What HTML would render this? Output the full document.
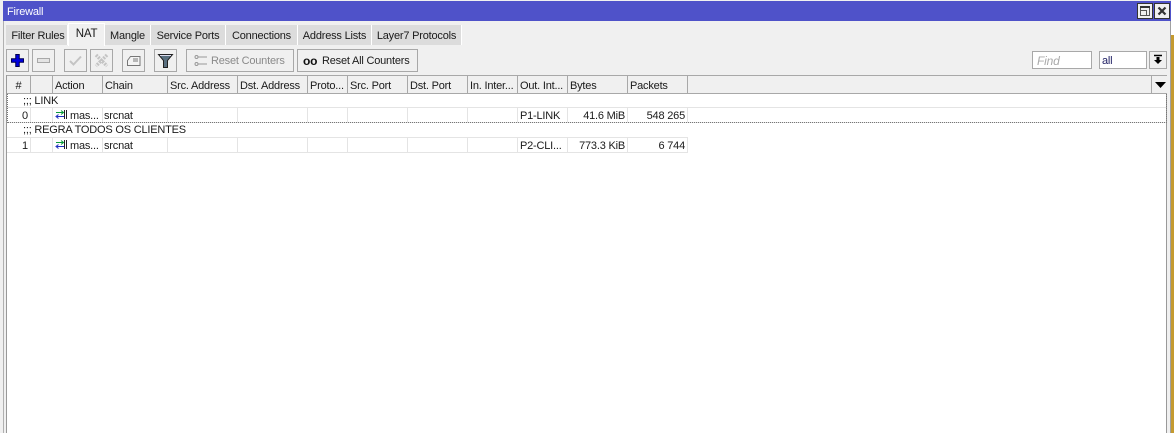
<!DOCTYPE html>
<html><head><meta charset="utf-8"><style>
html,body{margin:0;padding:0}
body{width:1174px;height:433px;overflow:hidden;position:relative;background:#fff;font:11px "Liberation Sans",sans-serif;letter-spacing:-.2px;color:#1a1a1a}
div,span.a{position:absolute;box-sizing:border-box;white-space:nowrap}
.tab{top:25px;height:20px;background:#dcdcdc;border-right:1px solid #fff;line-height:23px;text-align:center}
.btn{top:49px;height:23px;width:23px;background:#f0f0f0;border:1px solid #a8a8a8}
.btn svg{position:absolute;left:0;top:0}
.h{top:76px;height:17px;border-right:1px solid #a8a8a8;line-height:20px;padding-left:2px;overflow:hidden;background:#f0f0f0}
.t{line-height:14px;height:14px}
.b{line-height:16px;height:14px}
.v{width:1px;background:#e4e4e4;height:14px}
.r{text-align:right}
</style></head><body>
<div style="left:0;top:0;width:1171px;height:433px;background:#f0f0f0"></div>
<div style="left:3px;top:21px;width:1px;height:412px;background:#b0b0b0"></div>
<div style="left:1170px;top:21px;width:1px;height:412px;background:#a0a0a0"></div>
<div style="left:1171px;top:0;width:3px;height:35px;background:#fff"></div>
<div style="left:1171px;top:35px;width:3px;height:398px;background:#c49a30"></div>
<div style="left:3px;top:1px;width:1168px;height:20px;background:#4f52c9;color:#fff;line-height:22px;padding-left:4px;font-size:11px">Firewall</div>
<div style="left:1137px;top:3px;width:16px;height:16px;background:#f0f0f0;border:1px solid #333"><svg width="14" height="14" style="display:block"><path d="M2.500 2.500h9v9h-9z" fill="none" stroke="#555"/><path d="M2 3h10" stroke="#333" stroke-width="2"/><path d="M2.500 6.500h6v5" fill="none" stroke="#555"/></svg></div>
<div style="left:1154px;top:3px;width:16px;height:16px;background:#f0f0f0;border:1px solid #333"><svg width="14" height="14" style="display:block"><path d="M3.500 3.500l7 7M10.500 3.500l-7 7" stroke="#333" stroke-width="2.200" fill="none"/></svg></div>

<div class="tab" style="left:6px;width:62px;padding-left:3px">Filter Rules</div>
<div class="tab" style="left:68px;top:23px;height:23px;width:37px;background:#f0f0f0;border:1px solid #fff;border-bottom:0;line-height:21px;font-size:11.500px">NAT</div>
<div class="tab" style="left:105px;width:46px">Mangle</div>
<div class="tab" style="left:151px;width:75px">Service Ports</div>
<div class="tab" style="left:226px;width:72px">Connections</div>
<div class="tab" style="left:298px;width:74px">Address Lists</div>
<div class="tab" style="left:372px;width:90px">Layer7 Protocols</div>

<div class="btn" style="left:6px"><svg width="21" height="21"><path d="M10.500 4v13M4 10.500h13" stroke="#000050" stroke-width="4.500"/><path d="M10.500 5v11M5 10.500h11" stroke="#0000e0" stroke-width="2.500"/></svg></div>
<div class="btn" style="left:32px"><svg width="21" height="21"><rect x="4.500" y="8.500" width="12" height="4" fill="#e4e4e4" stroke="#a8a8a8"/></svg></div>
<div class="btn" style="left:64px"><svg width="21" height="21"><path d="M5 11l3.500 3.500 7.500-8" fill="none" stroke="#c4c4c4" stroke-width="2"/></svg></div>
<div class="btn" style="left:90px"><svg width="21" height="21"><path d="M5 5l11 11M16 5l-11 11" fill="none" stroke="#c4c4c4" stroke-width="3.500" stroke-dasharray="2 1"/></svg></div>
<div class="btn" style="left:122px"><svg width="21" height="21"><path d="M4.500 10.500l3-4h9.500v9h-12.500z" fill="#f4f4f4" stroke="#777"/><path d="M10 9h5M10 11h5" stroke="#777"/></svg></div>
<div class="btn" style="left:154px"><svg width="21" height="21"><path d="M3.500 4.500h14l-5 6v7h-4v-7z" fill="#5a7080" stroke="#222"/><path d="M5 5.500h11" stroke="#dde" stroke-width="1"/></svg></div>
<div class="btn" style="left:186px;width:108px;color:#8a8a8a;line-height:23px;padding-left:24px;font-size:11px">Reset Counters<svg width="21" height="21" style="left:3px"><circle cx="6.500" cy="7" r="1.500" fill="none" stroke="#999"/><circle cx="6.500" cy="14" r="1.500" fill="none" stroke="#999"/><path d="M8 7h9M8 14h9" stroke="#999"/></svg></div>
<div class="btn" style="left:297px;width:121px;line-height:23px;padding-left:24px">Reset All Counters<svg width="24" height="21"><text x="5" y="15" font-family="Liberation Sans" font-weight="700" font-size="12" fill="#111">oo</text></svg></div>

<div style="left:1032px;top:51px;width:60px;height:18px;background:#fff;border:1px solid #a8a8a8;color:#aaa;font-style:italic;font-size:12px;line-height:19px;padding-left:4px">Find</div>
<div style="left:1099px;top:51px;width:48px;height:18px;background:#fff;border:1px solid #a8a8a8;color:#222266;line-height:19px;padding-left:2px">all</div>
<div style="left:1149px;top:51px;width:18px;height:18px;background:#f0f0f0;border:1px solid #a8a8a8"><svg width="16" height="16" style="display:block"><path d="M4 3.500h8" stroke="#000" stroke-width="1.500"/><path d="M6.500 5h3v3h2.500l-4 4-4-4h2.500z" fill="#000"/></svg></div>

<div style="left:6px;top:75px;width:1161px;height:358px;background:#fff;border-left:1px solid #999;border-right:1px solid #999"></div>
<div style="left:7px;top:75px;width:1160px;height:1px;background:#a8a8a8"></div>
<div style="left:7px;top:93px;width:1160px;height:1px;background:#a8a8a8"></div>
<div class="h" style="left:7px;width:24px;text-align:center;padding:0">#</div>
<div class="h" style="left:31px;width:22px"></div>
<div class="h" style="left:53px;width:50px">Action</div>
<div class="h" style="left:103px;width:65px">Chain</div>
<div class="h" style="left:168px;width:70px">Src. Address</div>
<div class="h" style="left:238px;width:70px">Dst. Address</div>
<div class="h" style="left:308px;width:40px">Proto...</div>
<div class="h" style="left:348px;width:60px">Src. Port</div>
<div class="h" style="left:408px;width:60px">Dst. Port</div>
<div class="h" style="left:468px;width:50px">In. Inter...</div>
<div class="h" style="left:518px;width:50px">Out. Int...</div>
<div class="h" style="left:568px;width:60px">Bytes</div>
<div class="h" style="left:628px;width:60px">Packets</div>
<div class="h" style="left:688px;width:464px"></div>
<div class="h" style="left:1152px;width:15px;border-right:0;border-left:0"><svg width="15" height="18" style="display:block"><path d="M1 6h11l-5.500 6z" fill="#000"/></svg></div>
<div style="top:76px;left:1151px;width:1px;height:17px;background:#a8a8a8"></div>

<div style="left:7px;top:107px;width:1159px;height:1px;background:#e4e4e4"></div>
<div style="left:7px;top:122px;width:1159px;height:1px;background:#e4e4e4"></div>
<div style="left:7px;top:137px;width:681px;height:1px;background:#e4e4e4"></div>
<div style="left:7px;top:152px;width:681px;height:1px;background:#e4e4e4"></div>
<div style="left:7px;top:94px;width:1160px;height:29px;border:1px dotted #777;border-top:0"></div>

<div class="v" style="left:30px;top:108px"></div><div class="v" style="left:52px;top:108px"></div><div class="v" style="left:102px;top:108px"></div><div class="v" style="left:167px;top:108px"></div><div class="v" style="left:237px;top:108px"></div><div class="v" style="left:307px;top:108px"></div><div class="v" style="left:347px;top:108px"></div><div class="v" style="left:407px;top:108px"></div><div class="v" style="left:467px;top:108px"></div><div class="v" style="left:517px;top:108px"></div><div class="v" style="left:567px;top:108px"></div><div class="v" style="left:627px;top:108px"></div><div class="v" style="left:687px;top:108px"></div>
<div class="v" style="left:30px;top:138px"></div><div class="v" style="left:52px;top:138px"></div><div class="v" style="left:102px;top:138px"></div><div class="v" style="left:167px;top:138px"></div><div class="v" style="left:237px;top:138px"></div><div class="v" style="left:307px;top:138px"></div><div class="v" style="left:347px;top:138px"></div><div class="v" style="left:407px;top:138px"></div><div class="v" style="left:467px;top:138px"></div><div class="v" style="left:517px;top:138px"></div><div class="v" style="left:567px;top:138px"></div><div class="v" style="left:627px;top:138px"></div><div class="v" style="left:687px;top:138px"></div>

<div class="t" style="left:23px;top:94px">;;; LINK</div>
<div class="t b" style="left:22px;top:108px">0</div>
<svg width="12" height="12" style="position:absolute;left:55px;top:109px"><path d="M1 3.500h7" stroke="#0a9a3a"/><path d="M6 1.500l2.500 2-2.500 2" fill="none" stroke="#0a9a3a"/><path d="M2 7.500h7" stroke="#2030c0"/><path d="M3.500 5.500l-2.500 2 2.500 2" fill="none" stroke="#2030c0"/><path d="M9.500 1v9M11.500 1v9" stroke="#222"/></svg>
<div class="t b" style="left:70px;top:108px">mas...</div>
<div class="t b" style="left:104px;top:108px">srcnat</div>
<div class="t b" style="left:520px;top:108px">P1-LINK</div>
<div class="t b r" style="left:568px;width:57px;top:108px">41.6 MiB</div>
<div class="t b r" style="left:628px;width:57px;top:108px">548 265</div>

<div class="t" style="left:23px;top:123px">;;; REGRA TODOS OS CLIENTES</div>
<div class="t b" style="left:22px;top:138px">1</div>
<svg width="12" height="12" style="position:absolute;left:55px;top:139px"><path d="M1 3.500h7" stroke="#0a9a3a"/><path d="M6 1.500l2.500 2-2.500 2" fill="none" stroke="#0a9a3a"/><path d="M2 7.500h7" stroke="#2030c0"/><path d="M3.500 5.500l-2.500 2 2.500 2" fill="none" stroke="#2030c0"/><path d="M9.500 1v9M11.500 1v9" stroke="#222"/></svg>
<div class="t b" style="left:70px;top:138px">mas...</div>
<div class="t b" style="left:104px;top:138px">srcnat</div>
<div class="t b" style="left:520px;top:138px">P2-CLI...</div>
<div class="t b r" style="left:568px;width:57px;top:138px">773.3 KiB</div>
<div class="t b r" style="left:628px;width:57px;top:138px">6 744</div>
</body></html>
